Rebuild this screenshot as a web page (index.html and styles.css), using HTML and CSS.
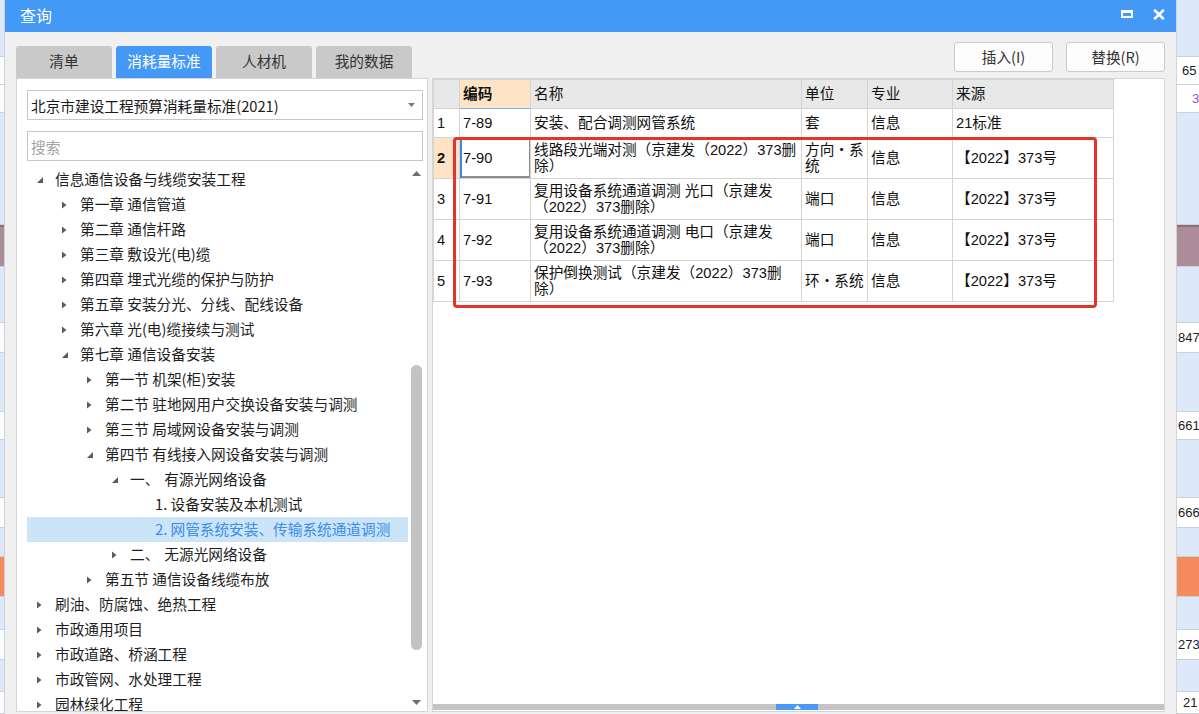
FILE: index.html
```html
<!DOCTYPE html>
<html lang="zh-CN">
<head>
<meta charset="utf-8">
<title>查询</title>
<link rel="stylesheet" href="styles.css">
</head>
<body>
<div class="strip strip-left">
  <div class="lb"></div><div class="wh"></div><div class="wh"></div><div class="lb"></div><div class="br"></div><div class="lb"></div><div class="wh"></div><div class="lb"></div><div class="wh"></div><div class="lb"></div><div class="wh"></div><div class="lb"></div><div class="or"></div><div class="lb"></div><div class="wh"></div><div class="lb"></div><div class="wh"></div>
</div>

<div class="dialog">
  <div class="titlebar">
    <span class="title">查询</span>
    <div class="win-ctrls">
      <svg class="ico-max" width="12" height="8" viewBox="0 0 12 8"><rect x="0" y="0" width="12" height="3" fill="#fff"/><rect x="1" y="1" width="10" height="6" fill="none" stroke="#fff" stroke-width="2"/></svg>
      <svg class="ico-close" width="12" height="11" viewBox="0 0 12 11"><path d="M1.2 0.8L10.8 10.2M10.8 0.8L1.2 10.2" stroke="#fff" stroke-width="2.6" fill="none"/></svg>
    </div>
  </div>

  <div class="toolbar">
    <div class="tabs">
      <div class="tab">清单</div>
      <div class="tab active">消耗量标准</div>
      <div class="tab">人材机</div>
      <div class="tab">我的数据</div>
    </div>
    <div class="actions">
      <button class="btn">插入(I)</button>
      <button class="btn">替换(R)</button>
    </div>
  </div>

  <div class="panels">
    <div class="left-panel">
      <div class="select">
        <span>北京市建设工程预算消耗量标准(2021)</span>
        <svg class="caret" width="7" height="4" viewBox="0 0 7 4"><path d="M0 0H7L3.5 4Z" fill="#7a7a7a"/></svg>
      </div>
      <div class="search">搜索</div>
      <div class="tree-wrap">
        <ul class="tree">
          <li class="lv0"><span class="tw"><svg width="6" height="6" viewBox="0 0 6 6"><path d="M6 0V6H0Z"/></svg></span>信息通信设备与线缆安装工程</li>
          <li class="lv1"><span class="tw"><svg width="5" height="8" viewBox="0 0 5 8"><path d="M0 0.5L4.5 4L0 7.5Z"/></svg></span>第一章 通信管道</li>
          <li class="lv1"><span class="tw"><svg width="5" height="8" viewBox="0 0 5 8"><path d="M0 0.5L4.5 4L0 7.5Z"/></svg></span>第二章 通信杆路</li>
          <li class="lv1"><span class="tw"><svg width="5" height="8" viewBox="0 0 5 8"><path d="M0 0.5L4.5 4L0 7.5Z"/></svg></span>第三章 敷设光(电)缆</li>
          <li class="lv1"><span class="tw"><svg width="5" height="8" viewBox="0 0 5 8"><path d="M0 0.5L4.5 4L0 7.5Z"/></svg></span>第四章 埋式光缆的保护与防护</li>
          <li class="lv1"><span class="tw"><svg width="5" height="8" viewBox="0 0 5 8"><path d="M0 0.5L4.5 4L0 7.5Z"/></svg></span>第五章 安装分光、分线、配线设备</li>
          <li class="lv1"><span class="tw"><svg width="5" height="8" viewBox="0 0 5 8"><path d="M0 0.5L4.5 4L0 7.5Z"/></svg></span>第六章 光(电)缆接续与测试</li>
          <li class="lv1"><span class="tw"><svg width="6" height="6" viewBox="0 0 6 6"><path d="M6 0V6H0Z"/></svg></span>第七章 通信设备安装</li>
          <li class="lv2"><span class="tw"><svg width="5" height="8" viewBox="0 0 5 8"><path d="M0 0.5L4.5 4L0 7.5Z"/></svg></span>第一节 机架(柜)安装</li>
          <li class="lv2"><span class="tw"><svg width="5" height="8" viewBox="0 0 5 8"><path d="M0 0.5L4.5 4L0 7.5Z"/></svg></span>第二节 驻地网用户交换设备安装与调测</li>
          <li class="lv2"><span class="tw"><svg width="5" height="8" viewBox="0 0 5 8"><path d="M0 0.5L4.5 4L0 7.5Z"/></svg></span>第三节 局域网设备安装与调测</li>
          <li class="lv2"><span class="tw"><svg width="6" height="6" viewBox="0 0 6 6"><path d="M6 0V6H0Z"/></svg></span>第四节 有线接入网设备安装与调测</li>
          <li class="lv3"><span class="tw"><svg width="6" height="6" viewBox="0 0 6 6"><path d="M6 0V6H0Z"/></svg></span>一、<span class="gap"></span>有源光网络设备</li>
          <li class="lv4"><span class="tw"></span>1. 设备安装及本机测试</li>
          <li class="lv4 sel"><span class="tw"></span>2. 网管系统安装、传输系统通道调测</li>
          <li class="lv3"><span class="tw"><svg width="5" height="8" viewBox="0 0 5 8"><path d="M0 0.5L4.5 4L0 7.5Z"/></svg></span>二、<span class="gap"></span>无源光网络设备</li>
          <li class="lv2"><span class="tw"><svg width="5" height="8" viewBox="0 0 5 8"><path d="M0 0.5L4.5 4L0 7.5Z"/></svg></span>第五节 通信设备线缆布放</li>
          <li class="lv0"><span class="tw"><svg width="5" height="8" viewBox="0 0 5 8"><path d="M0 0.5L4.5 4L0 7.5Z"/></svg></span>刷油、防腐蚀、绝热工程</li>
          <li class="lv0"><span class="tw"><svg width="5" height="8" viewBox="0 0 5 8"><path d="M0 0.5L4.5 4L0 7.5Z"/></svg></span>市政通用项目</li>
          <li class="lv0"><span class="tw"><svg width="5" height="8" viewBox="0 0 5 8"><path d="M0 0.5L4.5 4L0 7.5Z"/></svg></span>市政道路、桥涵工程</li>
          <li class="lv0"><span class="tw"><svg width="5" height="8" viewBox="0 0 5 8"><path d="M0 0.5L4.5 4L0 7.5Z"/></svg></span>市政管网、水处理工程</li>
          <li class="lv0"><span class="tw"><svg width="5" height="8" viewBox="0 0 5 8"><path d="M0 0.5L4.5 4L0 7.5Z"/></svg></span>园林绿化工程</li>
        </ul>
        <div class="vscroll">
          <svg class="v-up" width="9" height="5" viewBox="0 0 9 5"><path d="M0 5L4.5 0L9 5Z" fill="#6e6e6e"/></svg>
          <div class="v-thumb"></div>
          <svg class="v-down" width="9" height="5" viewBox="0 0 9 5"><path d="M0 0H9L4.5 5Z" fill="#6e6e6e"/></svg>
        </div>
      </div>
    </div>

    <div class="right-panel">
      <div class="grid">
        <div class="cell hd"></div>
        <div class="cell hd cur">编码</div>
        <div class="cell hd">名称</div>
        <div class="cell hd">单位</div>
        <div class="cell hd">专业</div>
        <div class="cell hd">来源</div>

        <div class="cell num">1</div>
        <div class="cell">7-89</div>
        <div class="cell">安装、配合调测网管系统</div>
        <div class="cell">套</div>
        <div class="cell">信息</div>
        <div class="cell">21标准</div>

        <div class="cell num cur">2</div>
        <div class="cell focus">7-90</div>
        <div class="cell">线路段光端对测（京建发（2022）373删<br>除）</div>
        <div class="cell">方向・系<br>统</div>
        <div class="cell">信息</div>
        <div class="cell">【2022】373号</div>

        <div class="cell num">3</div>
        <div class="cell">7-91</div>
        <div class="cell">复用设备系统通道调测 光口（京建发<br>（2022）373删除）</div>
        <div class="cell">端口</div>
        <div class="cell">信息</div>
        <div class="cell">【2022】373号</div>

        <div class="cell num">4</div>
        <div class="cell">7-92</div>
        <div class="cell">复用设备系统通道调测 电口（京建发<br>（2022）373删除）</div>
        <div class="cell">端口</div>
        <div class="cell">信息</div>
        <div class="cell">【2022】373号</div>

        <div class="cell num">5</div>
        <div class="cell">7-93</div>
        <div class="cell">保护倒换测试（京建发（2022）373删<br>除）</div>
        <div class="cell">环・系统</div>
        <div class="cell">信息</div>
        <div class="cell">【2022】373号</div>
      </div>
      <div class="mark"></div>
      <div class="hscroll">
        <div class="h-thumb"><svg width="7" height="4" viewBox="0 0 7 4"><path d="M0 4L3.5 0L7 4Z" fill="#fff"/></svg></div>
      </div>
    </div>
  </div>
</div>

<div class="strip strip-right">
  <div class="lb"></div><div class="wh t-65">65</div><div class="wh t-3">3</div><div class="lb"></div><div class="br"></div><div class="lb"></div><div class="wh t-n">847</div><div class="lb"></div><div class="wh t-n">661</div><div class="lb"></div><div class="wh t-n">666</div><div class="lb"></div><div class="or"></div><div class="lb"></div><div class="wh t-n">273</div><div class="lb"></div><div class="wh t-21">21</div>
</div>
</body>
</html>
```

FILE: styles.css
```css
* { box-sizing: border-box; }
html, body { margin: 0; padding: 0; }
body {
  width: 1199px;
  height: 714px;
  overflow: hidden;
  display: flex;
  font-family: "Noto Sans CJK SC", "Liberation Sans", sans-serif;
  font-size: 14.67px;
  color: #1e1e1e;
  background: #dde8f8;
}

/* background application strips */
.strip {
  flex: none;
  height: 714px;
  display: grid;
  grid-template-rows: 57px 28px 28px 112px 42px 56px 30px 59px 28px 58px 30px 29px 40px 33px 30px 32px 22px;
  font-family: "Liberation Sans", sans-serif;
  font-size: 13px;
  color: #222;
  overflow: hidden;
}
.strip-left { width: 4px; }
.strip-right { width: 22px; }
.strip div {
  border-bottom: 1px solid #c8d2df;
  display: flex;
  align-items: center;
  white-space: nowrap;
}
.lb { background: #dde8f8; }
.wh { background: #fff; }
.br { background: #ad8c99; border-top: 2px solid #8c6d7a; }
.or { background: #f58a5c; }
.t-65 { padding-left: 5px; }
.t-3 { padding-left: 15px; color: #a24bc4; }
.t-n { padding-left: 1px; }
.t-21 { padding-left: 6px; }

/* dialog */
.dialog {
  flex: none;
  width: 1173px;
  height: 714px;
  background: #f0f0f0;
  display: flex;
  flex-direction: column;
  border-left: 1px solid #c9d3df;
  border-right: 1px solid #d3d3d3;
}
.titlebar {
  height: 32px;
  flex: none;
  background: #4499f7;
  color: #fff;
  font-size: 16px;
  display: flex;
  align-items: center;
  justify-content: space-between;
  padding: 0 11px 2px 15px;
}
.win-ctrls {
  display: flex;
  align-items: center;
  gap: 20px;
}
.ico-max { margin-top: -2px; }
.ico-close { margin-top: -1px; }

.toolbar {
  height: 46px;
  flex: none;
  display: flex;
  align-items: flex-end;
  padding: 0 11px;
}
.tabs { display: flex; gap: 4px; }
.tab {
  width: 96px;
  height: 32px;
  background: #c9c9c9;
  color: #333;
  border-radius: 3px 3px 0 0;
  display: flex;
  align-items: center;
  justify-content: center;
  padding-bottom: 3px;
}
.tab.active { background: #4499f7; color: #fff; }
.actions {
  margin-left: auto;
  align-self: flex-start;
  margin-top: 10px;
  display: flex;
  gap: 13px;
}
.btn {
  width: 99px;
  height: 30px;
  background: #fdfdfd;
  border: 1px solid #cacaca;
  border-radius: 3px;
  font: inherit;
  color: #333;
  padding: 0 0 2px;
}

.panels {
  height: 634px;
  flex: none;
  display: flex;
  gap: 4px;
  padding: 0 11px;
}

/* left tree panel */
.left-panel {
  width: 412px;
  background: #fff;
  border: 1px solid #d6d6d6;
  padding: 11px 0 0 10px;
  display: flex;
  flex-direction: column;
}
.select, .search {
  width: 396px;
  height: 30px;
  border: 1px solid #c8c8c8;
  display: flex;
  align-items: center;
  flex: none;
}
.select {
  justify-content: space-between;
  padding: 0 7px 0 3px;
  color: #1a1a1a;
}
.search {
  margin-top: 11px;
  padding-left: 3px;
  color: #a3a3a3;
}
.tree-wrap {
  margin-top: 6px;
  flex: 1;
  min-height: 0;
  display: flex;
}
.tree {
  list-style: none;
  margin: 0;
  padding: 0;
  width: 381px;
  flex: none;
  overflow: hidden;
}
.tree li {
  height: 25px;
  display: flex;
  align-items: center;
  white-space: nowrap;
  color: #1e1e1e;
  padding-bottom: 2px;
}
.tree li.sel { background: #cce4f7; color: #3a8de9; }
.tw {
  width: 18px;
  flex: none;
  display: flex;
  align-items: center;
  margin-top: 2px;
}
.tw svg { fill: #5c5c5c; display: block; }
.lv0 { padding-left: 10px; }
.lv1 { padding-left: 35px; }
.lv2 { padding-left: 60px; }
.lv3 { padding-left: 85px; }
.lv4 { padding-left: 110px; }
.gap { display: inline-block; width: 5px; }

.vscroll {
  width: 14px;
  margin-left: 1px;
  display: flex;
  flex-direction: column;
  align-items: center;
  padding-top: 4px;
}
.v-up, .v-down { display: block; flex: none; }
.v-thumb {
  width: 11px;
  height: 285px;
  margin-top: 189px;
  background: #c3c3c3;
  border-radius: 6px;
  flex: none;
}
.v-down { margin-top: auto; margin-bottom: 6px; }

/* right result panel */
.right-panel {
  width: 733px;
  background: #fff;
  border: 1px solid #d6d6d6;
  position: relative;
  display: flex;
  flex-direction: column;
}
.grid {
  display: grid;
  grid-template-columns: 26px 71px 271px 66px 85px 161px;
  grid-template-rows: 29px 29px 41px 41px 41px 41px;
  width: 681px;
  border-top: 1px solid #d4d4d4;
  border-left: 1px solid #d4d4d4;
  font-family: "Liberation Sans", "Noto Sans CJK SC", sans-serif;
  color: #111;
}
.cell {
  border-right: 1px solid #d4d4d4;
  border-bottom: 1px solid #d4d4d4;
  padding: 0 3px 1px;
  display: flex;
  align-items: center;
  line-height: 16px;
  white-space: nowrap;
  overflow: hidden;
}
.hd { background: #e8e8e8; }
.hd.cur { background: #fde4c6; font-weight: bold; border-bottom-color: #7fb0ec; }
.num.cur { background: #fde4c6; font-weight: bold; }
.focus {
  box-shadow: inset 2px 0 0 #3b86e6, inset 0 1px 0 #8e8e8e, inset -1px 0 0 #8e8e8e, inset 0 -2px 0 #8e8e8e;
}
.mark {
  position: absolute;
  left: 20px;
  top: 58px;
  width: 644px;
  height: 171px;
  border: 3px solid #e6332a;
  border-radius: 4px;
  pointer-events: none;
}
.hscroll {
  margin-top: auto;
  margin-bottom: 1px;
  height: 6px;
  background: #c4c4c4;
  display: flex;
}
.h-thumb {
  width: 42px;
  height: 6px;
  margin-left: 343px;
  background: #4a9af5;
  display: flex;
  align-items: center;
  justify-content: center;
}
.h-thumb svg { display: block; }
```
